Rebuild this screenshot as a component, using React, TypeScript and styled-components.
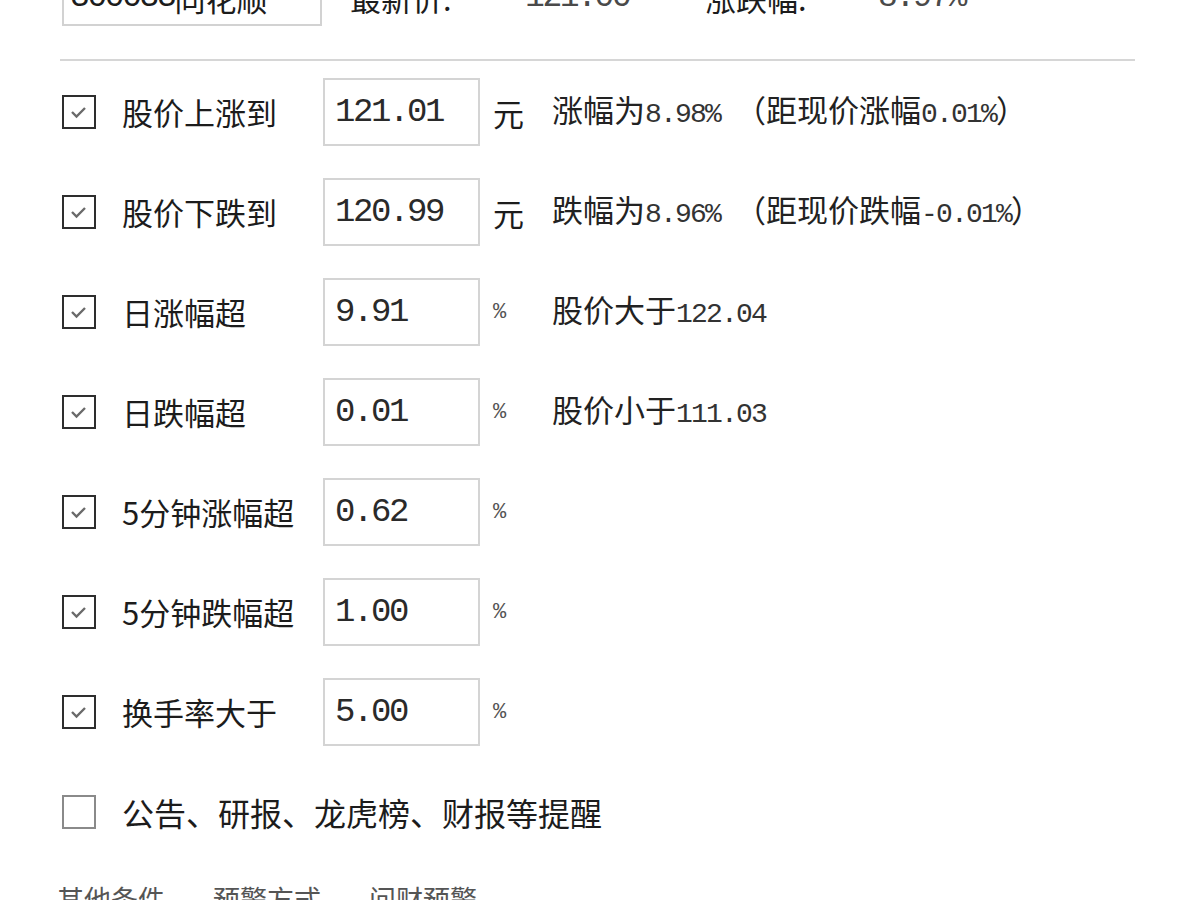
import styled, { createGlobalStyle } from "styled-components";

const GlobalStyle = createGlobalStyle`
  html, body {
    margin: 0;
    padding: 0;
    background: #ffffff;
    overflow: hidden;
  }
  body {
    font-family: "Noto Sans CJK SC", "Noto Sans", sans-serif;
    color: #1c1c1c;
  }
`;

const Page = styled.div`
  width: 1200px;
  height: 900px;
  box-sizing: border-box;
  padding: 0 65px 0 62px;
  overflow: hidden;
`;

const Header = styled.div`
  display: flex;
  align-items: center;
  height: 68px;
  margin-top: -42px;
`;

const StockBox = styled.div`
  width: 260px;
  height: 68px;
  box-sizing: border-box;
  border: 2px solid #d2d2d2;
  padding: 12px 0 0 6px;
  display: flex;
  align-items: center;
  font-size: 31px;
  line-height: 34px;
`;

const Code = styled.span`
  font-family: "Liberation Mono", monospace;
  font-size: 33px;
  letter-spacing: -2.4px;
`;

const Stat = styled.span<{ $w: number }>`
  width: ${(p) => p.$w}px;
  padding-top: 12px;
  font-size: 31px;
  line-height: 34px;
`;

const StatValue = styled.span<{ $w: number }>`
  width: ${(p) => p.$w}px;
  padding-top: 12px;
  font-family: "Liberation Mono", monospace;
  font-size: 33px;
  letter-spacing: -2.4px;
  line-height: 34px;
  color: #4a4a4a;
`;

const Divider = styled.div`
  margin: 33px 0 0 -2px;
  height: 2px;
  width: 1075px;
  background: #d6d6d6;
`;

const List = styled.div`
  display: flex;
  flex-direction: column;
  gap: 32px;
  padding-top: 17px;
`;

const Row = styled.div`
  display: flex;
  align-items: center;
  height: 68px;
`;

const Box = styled.span<{ $on: boolean }>`
  flex: none;
  width: 34px;
  height: 34px;
  box-sizing: border-box;
  border: 2px solid ${(p) => (p.$on ? "#2e2e2e" : "#8a8a8a")};
  margin-right: 26px;
  display: flex;
`;

const Label = styled.span`
  flex: none;
  width: 201px;
  font-size: 31px;
  line-height: 34px;
  white-space: nowrap;
`;

const Field = styled.input`
  flex: none;
  width: 157px;
  height: 68px;
  box-sizing: border-box;
  border: 2px solid #d4d4d4;
  padding: 0 0 0 10px;
  margin: 0;
  outline: none;
  background: #fff;
  font-family: "Liberation Mono", monospace;
  font-size: 34px;
  letter-spacing: -2.4px;
  color: #2a2a2a;
`;

const Unit = styled.span<{ $mono: boolean }>`
  flex: none;
  width: 59px;
  margin-left: 13px;
  font-family: ${(p) =>
    p.$mono ? `"Liberation Mono", monospace` : `"Noto Sans CJK SC", sans-serif`};
  font-size: ${(p) => (p.$mono ? "22px" : "31px")};
  color: ${(p) => (p.$mono ? "#555" : "#1c1c1c")};
`;

const Desc = styled.span`
  font-size: 31px;
  line-height: 34px;
  white-space: nowrap;
  color: #222;
`;

const Num = styled.span`
  font-family: "Liberation Mono", monospace;
  font-size: 28px;
  letter-spacing: -1.8px;
  color: #333;
`;

const Note = styled.span`
  font-size: 32px;
  line-height: 34px;
  white-space: nowrap;
`;

const Tabs = styled.div`
  display: flex;
  gap: 48px;
  margin: 38px 0 0 -5px;
`;

const Tab = styled.span`
  font-size: 27px;
  line-height: 30px;
  color: #555;
`;

type Part = { t: string; n?: boolean };

type Rule = {
  label: string;
  value: string;
  unit: "元" | "%";
  desc: Part[];
};

const rules: Rule[] = [
  {
    label: "股价上涨到",
    value: "121.01",
    unit: "元",
    desc: [
      { t: "涨幅为" },
      { t: "8.98% ", n: true },
      { t: "（距现价涨幅" },
      { t: "0.01%", n: true },
      { t: "）" },
    ],
  },
  {
    label: "股价下跌到",
    value: "120.99",
    unit: "元",
    desc: [
      { t: "跌幅为" },
      { t: "8.96% ", n: true },
      { t: "（距现价跌幅" },
      { t: "-0.01%", n: true },
      { t: "）" },
    ],
  },
  {
    label: "日涨幅超",
    value: "9.91",
    unit: "%",
    desc: [{ t: "股价大于" }, { t: "122.04", n: true }],
  },
  {
    label: "日跌幅超",
    value: "0.01",
    unit: "%",
    desc: [{ t: "股价小于" }, { t: "111.03", n: true }],
  },
  { label: "5分钟涨幅超", value: "0.62", unit: "%", desc: [] },
  { label: "5分钟跌幅超", value: "1.00", unit: "%", desc: [] },
  { label: "换手率大于", value: "5.00", unit: "%", desc: [] },
];

function CheckBox({ on }: { on: boolean }) {
  return (
    <Box $on={on}>
      {on && (
        <svg width="30" height="30" viewBox="0 0 30 30">
          <polyline
            points="8,15 12.5,19.5 21,11"
            fill="none"
            stroke="#6a6a6a"
            strokeWidth="2.4"
          />
        </svg>
      )}
    </Box>
  );
}

export default function App() {
  return (
    <>
      <GlobalStyle />
      <Page>
        <Header>
          <StockBox>
            <Code>300033</Code>同花顺
          </StockBox>
          <Stat $w={28} />
          <Stat $w={175}>最新价:</Stat>
          <StatValue $w={180}>121.00</StatValue>
          <Stat $w={173}>涨跌幅:</Stat>
          <StatValue $w={120}>8.97%</StatValue>
        </Header>
        <Divider />
        <List>
          {rules.map((r) => (
            <Row key={r.label}>
              <CheckBox on />
              <Label>{r.label}</Label>
              <Field readOnly value={r.value} />
              <Unit $mono={r.unit === "%"}>{r.unit}</Unit>
              <Desc>
                {r.desc.map((p, i) =>
                  p.n ? <Num key={i}>{p.t}</Num> : <span key={i}>{p.t}</span>
                )}
              </Desc>
            </Row>
          ))}
          <Row>
            <CheckBox on={false} />
            <Note>公告、研报、龙虎榜、财报等提醒</Note>
          </Row>
        </List>
        <Tabs>
          <Tab>其他条件</Tab>
          <Tab>预警方式</Tab>
          <Tab>问财预警</Tab>
        </Tabs>
      </Page>
    </>
  );
}
